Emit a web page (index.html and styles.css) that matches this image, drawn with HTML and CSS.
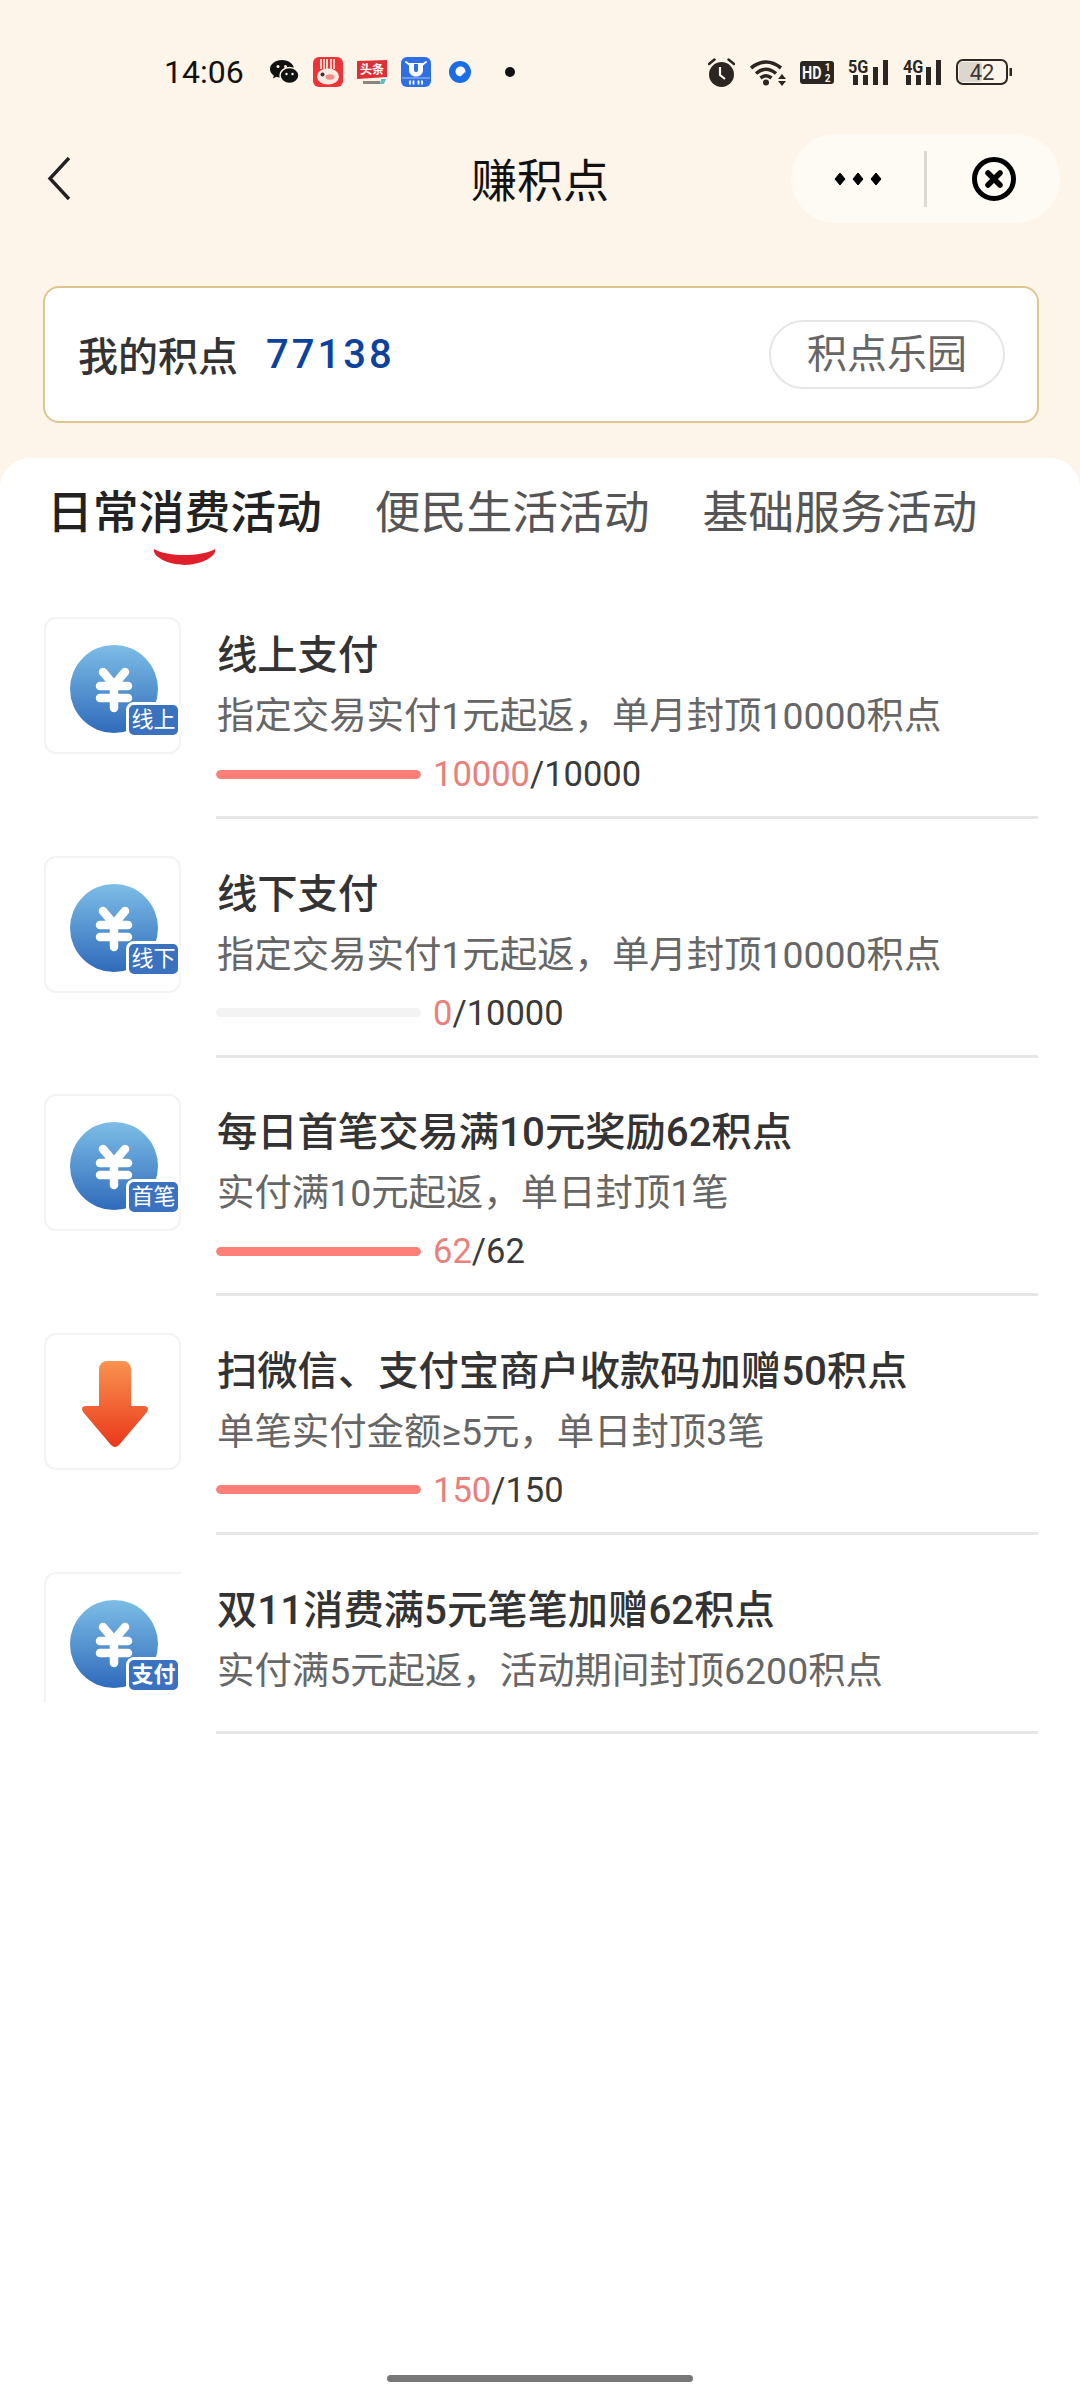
FILE: index.html
```html
<!DOCTYPE html>
<html>
<head>
    <meta charset="utf-8">
    <title>赚积点</title>
    <link rel="stylesheet" href="styles.css">
</head>
<body>
    <svg class="svg-defs" width="0" height="0">
        <defs>
            <linearGradient id="coin-fill" x1="0" y1="0" x2="0" y2="1">
                <stop offset="0" stop-color="#7dbde6"/>
                <stop offset="1" stop-color="#2f6bbb"/>
            </linearGradient>
            <linearGradient id="arrow-fill" x1="0" y1="0" x2="0" y2="1">
                <stop offset="0" stop-color="#f99350"/>
                <stop offset="1" stop-color="#e9381a"/>
            </linearGradient>
            <symbol id="coin" viewBox="0 0 133 133">
                <circle cx="68" cy="70" r="44" fill="url(#coin-fill)"/>
                <path d="M57 53 68 66 79 53M68 66V89M54 67H82M54 79H82" fill="none" stroke="#fff" stroke-width="8.5" stroke-linecap="round" stroke-linejoin="round"/>
            </symbol>
        </defs>
    </svg>

    <div class="page">
        <div class="statusbar">
            <div class="status-left">
                <span class="clock">14:06</span>
                <!-- wechat -->
                <svg class="ic-wechat" width="29" height="24" viewBox="0 0 29 24">
                    <path d="M12 0C5.400 0 0 4 0 9c0 2.700 1.500 5 3.800 6.600L3 18.500l3.400-1.700c1.700.6 3.600.9 5.600.9 6.600 0 12-4 12-8.700S18.600 0 12 0z" fill="#111"/>
                    <ellipse cx="19.500" cy="15.500" rx="9.500" ry="8" fill="#111" stroke="#fef5ea" stroke-width="1.500"/>
                    <circle cx="8" cy="6.500" r="1.500" fill="#fef5ea"/>
                    <circle cx="15.500" cy="6.500" r="1.500" fill="#fef5ea"/>
                    <circle cx="16.500" cy="14" r="1.200" fill="#fef5ea"/>
                    <circle cx="22.500" cy="14" r="1.200" fill="#fef5ea"/>
                </svg>
                <!-- red shopping app -->
                <svg width="30" height="30" viewBox="0 0 30 30">
                    <rect width="30" height="30" rx="6" fill="#ee3338"/>
                    <path d="M8 2v10M11 2v10M14 2v10M18 2v10M21 2v10" stroke="#fbe3d6" stroke-width="1.800"/>
                    <ellipse cx="15" cy="19.500" rx="11" ry="8" fill="#fbe9e3"/>
                    <ellipse cx="17" cy="20" rx="4.500" ry="2.800" fill="#f08d88"/>
                    <circle cx="9.500" cy="17.500" r="2" fill="#333"/>
                </svg>
                <!-- toutiao -->
                <svg width="30" height="25" viewBox="0 0 30 25">
                    <path d="M0 1 30 0V17L0 19z" fill="#dd2f35"/>
                    <text class="ic-text" x="15" y="14" font-size="12" font-weight="700" fill="#fff" text-anchor="middle">头条</text>
                    <rect x="6" y="21" width="17" height="3" fill="#8c8480"/>
                    <path d="M24 19h5l-2 5h-4z" fill="#59c2b8"/>
                </svg>
                <!-- blue app -->
                <svg width="30" height="30" viewBox="0 0 30 30">
                    <rect width="30" height="30" rx="6" fill="#2f6fe4"/>
                    <path d="M5 5 9 8M25 5 21 8" stroke="#fff" stroke-width="2" stroke-linecap="round"/>
                    <path d="M8 6h14v7c0 4-3 6.500-7 6.500S8 17 8 13z" fill="#fff"/>
                    <path d="M13 7h4v6c0 1.500-1 2-2 2s-2-.5-2-2z" fill="#2f6fe4"/>
                    <path d="M1 21H29" stroke="#a9c6f5" stroke-width="1"/>
                    <path d="M9 23.500v4M12.500 23.500v4M17.500 23.500v4M21 23.500v4" stroke="#fff" stroke-width="1.800"/>
                </svg>
                <!-- round blue app -->
                <svg class="ic-round" width="22" height="22" viewBox="0 0 22 22">
                    <circle cx="11" cy="11" r="11" fill="#1b6de6"/>
                    <circle cx="11.500" cy="10.500" r="5" fill="#fff"/>
                    <path d="M11 16 16 11 17 16z" fill="#1b6de6"/>
                </svg>
                <span class="status-dot"></span>
            </div>
            <div class="status-right">
                <svg width="27" height="29" viewBox="0 0 27 29">
                    <circle cx="13.500" cy="16.500" r="12.500" fill="#2b2622"/>
                    <path d="M12 9v8l5 4" fill="none" stroke="#fef5ea" stroke-width="2.200"/>
                    <path d="M1 6 6.500 1.500M26 6 20.500 1.500" stroke="#2b2622" stroke-width="2.500" stroke-linecap="round"/>
                </svg>
                <svg width="37" height="27" viewBox="0 0 37 27">
                    <path d="M2 9Q17-3 32 9M7 14.500Q17 6 27 14.500M11.500 19Q17 14.500 22.500 19" fill="none" stroke="#2b2622" stroke-width="3.600"/>
                    <circle cx="17" cy="23.500" r="3" fill="#2b2622"/>
                    <path d="M29 20 33 15 37 20zM29 22H37L33 27z" fill="#2b2622"/>
                </svg>
                <svg width="34" height="23" viewBox="0 0 34 23">
                    <rect width="34" height="23" rx="3" fill="#2b2622"/>
                    <text class="ic-text" transform="translate(2 18) scale(.8 1)" font-size="18" font-weight="700" fill="#fef5ea">HD</text>
                    <text class="ic-text" x="27.500" y="10" font-size="10" font-weight="700" fill="#fef5ea" text-anchor="middle">1</text>
                    <text class="ic-text" x="27.500" y="21" font-size="10" font-weight="700" fill="#fef5ea" text-anchor="middle">2</text>
                </svg>
                <svg width="41" height="27" viewBox="0 0 41 27">
                    <text class="ic-text" transform="translate(0 14) scale(.85 1)" font-size="19" font-weight="700" fill="#2b2622">5G</text>
                    <path d="M5 16h5v10H5zM15 16h5v10h-5zM25 8h5v18h-5zM35 1h5v25h-5z" fill="#2b2622"/>
                </svg>
                <svg width="39" height="27" viewBox="0 0 39 27">
                    <text class="ic-text" transform="translate(0 14) scale(.85 1)" font-size="19" font-weight="700" fill="#2b2622">4G</text>
                    <path d="M3 16h5v10H3zM13 16h5v10h-5zM23 8h5v18h-5zM33 1h5v25h-5z" fill="#2b2622"/>
                </svg>
                <svg width="56" height="26" viewBox="0 0 56 26">
                    <rect x="3" y="3" width="23" height="20" rx="3" fill="#dbd6ce"/>
                    <rect x="1" y="1" width="50" height="24" rx="6" fill="none" stroke="#2b2622" stroke-width="2"/>
                    <rect x="53.500" y="9" width="2.500" height="8" fill="#2b2622"/>
                    <text class="ic-text" x="26" y="21" font-size="22" fill="#3a3532" text-anchor="middle">42</text>
                </svg>
            </div>
        </div>

        <div class="nav">
            <svg class="nav-back" width="24" height="45" viewBox="0 0 24 45">
                <path d="M22 2 3 22.500 22 43" fill="none" stroke="#222" stroke-width="3.400"/>
            </svg>
            <div class="nav-title">赚积点</div>
            <div class="capsule">
                <div class="capsule-btn">
                    <svg width="48" height="14" viewBox="0 0 48 14">
                        <path d="M6 1l5 6-5 6-5-6zM24 1l5 6-5 6-5-6zM42 1l5 6-5 6-5-6z" fill="#000" stroke="#000" stroke-width="1" stroke-linejoin="round"/>
                    </svg>
                </div>
                <div class="capsule-line"></div>
                <div class="capsule-btn">
                    <svg width="44" height="44" viewBox="0 0 44 44">
                        <circle cx="22" cy="22" r="19.500" fill="none" stroke="#000" stroke-width="5"/>
                        <path d="M16 16 28 28M28 16 16 28" stroke="#000" stroke-width="5.500" stroke-linecap="round"/>
                    </svg>
                </div>
            </div>
        </div>

        <div class="points-card">
            <span class="points-label">我的积点</span>
            <span class="points-value">77138</span>
            <span class="points-btn">积点乐园</span>
        </div>

        <div class="sheet">
            <div class="tabs">
                <div class="tab active">
                    日常消费活动
                    <svg class="tab-mark" width="63" height="17" viewBox="0 0 63 17">
                        <path d="M1 1C15 9 48 9 62 1 64 10 45 17 31.500 17 18 17-1 10 1 1z" fill="#e01f2c"/>
                    </svg>
                </div>
                <div class="tab">便民生活活动</div>
                <div class="tab">基础服务活动</div>
            </div>

            <div class="list">
                <div class="row">
                    <div class="icon-box">
                        <svg class="icon-svg" viewBox="0 0 133 133"><use href="#coin"/></svg>
                        <span class="badge">线上</span>
                    </div>
                    <div class="row-body">
                        <div class="row-title">线上支付</div>
                        <div class="row-desc">指定交易实付1元起返，单月封顶10000积点</div>
                        <div class="progress">
                            <div class="bar"><div class="bar-fill" style="width: 100%"></div></div>
                            <span class="count"><em>10000</em>/10000</span>
                        </div>
                    </div>
                </div>

                <div class="row">
                    <div class="icon-box">
                        <svg class="icon-svg" viewBox="0 0 133 133"><use href="#coin"/></svg>
                        <span class="badge">线下</span>
                    </div>
                    <div class="row-body">
                        <div class="row-title">线下支付</div>
                        <div class="row-desc">指定交易实付1元起返，单月封顶10000积点</div>
                        <div class="progress">
                            <div class="bar"><div class="bar-fill" style="width: 0%"></div></div>
                            <span class="count"><em>0</em>/10000</span>
                        </div>
                    </div>
                </div>

                <div class="row">
                    <div class="icon-box">
                        <svg class="icon-svg" viewBox="0 0 133 133"><use href="#coin"/></svg>
                        <span class="badge">首笔</span>
                    </div>
                    <div class="row-body">
                        <div class="row-title">每日首笔交易满10元奖励62积点</div>
                        <div class="row-desc">实付满10元起返，单日封顶1笔</div>
                        <div class="progress">
                            <div class="bar"><div class="bar-fill" style="width: 100%"></div></div>
                            <span class="count"><em>62</em>/62</span>
                        </div>
                    </div>
                </div>

                <div class="row">
                    <div class="icon-box">
                        <svg class="icon-svg" viewBox="0 0 133 133">
                            <path d="M61 26h16a8 8 0 0 1 8 8V71h13q6 0 3 6L73 110q-4 4-8 0L37 77q-3-6 3-6H53V34a8 8 0 0 1 8-8z" fill="url(#arrow-fill)"/>
                        </svg>
                    </div>
                    <div class="row-body">
                        <div class="row-title">扫微信、支付宝商户收款码加赠50积点</div>
                        <div class="row-desc">单笔实付金额≥5元，单日封顶3笔</div>
                        <div class="progress">
                            <div class="bar"><div class="bar-fill" style="width: 100%"></div></div>
                            <span class="count"><em>150</em>/150</span>
                        </div>
                    </div>
                </div>

                <div class="row">
                    <div class="icon-box cut">
                        <svg class="icon-svg" viewBox="0 0 133 133"><use href="#coin"/></svg>
                        <span class="badge strong">支付</span>
                    </div>
                    <div class="row-body">
                        <div class="row-title">双11消费满5元笔笔加赠62积点</div>
                        <div class="row-desc">实付满5元起返，活动期间封顶6200积点</div>
                    </div>
                </div>
            </div>

            <div class="home-bar"></div>
        </div>
    </div>
</body>
</html>
```

FILE: styles.css
```css
* { box-sizing: border-box; }
body { margin: 0; background: #fef5ea; font-family: Roboto, "Noto Sans CJK SC", sans-serif; color: #333; }
.svg-defs { position: absolute; }
.ic-text { font-family: Roboto, "Noto Sans CJK SC", sans-serif; }
.page { min-height: 2400px; display: flex; flex-direction: column; }

/* status bar */
.statusbar { display: flex; justify-content: space-between; align-items: center; height: 48px; margin-top: 48px; padding: 0 68px 0 164px; }
.status-left { display: flex; align-items: center; gap: 14px; }
.status-right { display: flex; align-items: center; gap: 14px; }
.clock { font-size: 32px; color: #111; width: 92px; }
.ic-round { margin-left: 4px; }
.status-dot { width: 10px; height: 10px; border-radius: 50%; background: #111; margin-left: 20px; }

/* nav */
.nav { display: grid; grid-template-columns: 269px 1fr 269px; align-items: center; height: 89px; margin-top: 38px; padding: 0 20px; }
.nav-title { font-size: 46px; color: #111; line-height: 83px; padding-top: 6px; text-align: center; }
.nav-back { justify-self: start; margin-left: 27px; }
.capsule { justify-self: end; display: flex; align-items: center; width: 269px; height: 89px; border-radius: 45px; background: #fefaf4; }
.capsule-btn { flex: 1; display: flex; align-items: center; justify-content: center; }
.capsule-line { width: 3px; height: 56px; background: #ddd9d3; }

/* points card */
.points-card { display: flex; align-items: center; height: 137px; margin: 63px 41px 0 43px; padding: 0 32px 0 33px; background: #fff; border: 2px solid #e0c48f; border-radius: 16px; }
.points-label { font-size: 40px; font-weight: 500; color: #333; padding-bottom: 2px; }
.points-value { font-size: 40px; font-weight: 500; color: #0c429e; letter-spacing: 3px; margin-left: 28px; }
.points-btn { margin-left: auto; width: 236px; height: 69px; line-height: 65px; text-align: center; font-size: 40px; color: #666; border: 2px solid #e6e6e6; border-radius: 35px; }

/* sheet and tabs */
.sheet { flex: 1; display: flex; flex-direction: column; margin-top: 35px; background: #fff; border-radius: 30px 30px 0 0; }
.tabs { display: flex; align-items: flex-start; gap: 53px; height: 107px; padding: 26px 0 0 47px; }
.tab { font-size: 45.8px; line-height: 60px; color: #555; }
.tab.active { font-weight: 500; color: #222; }
.tab-mark { display: block; margin: 4px 0 0 106px; }

/* list */
.list { padding: 52px 42px 0 44px; }
.row { display: flex; gap: 35px; margin-bottom: 36.67px; }
.icon-box { position: relative; flex: none; width: 137px; height: 137px; border: 2px solid #f3f3f3; border-radius: 12px; }
.icon-box.cut { height: 131px; border-right: 0; border-bottom: 0; border-radius: 12px 0 0 0; }
.icon-svg { display: block; width: 133px; height: 133px; }
.badge { position: absolute; left: 80px; top: 83px; width: 55px; height: 36px; line-height: 30px; text-align: center; font-size: 22px; color: #fff; background: #3a72bf; border: 3px solid #fff; border-radius: 8px; }
.badge.strong { font-weight: 700; }
.row-body { flex: 1; padding: 9px 0 30px; border-bottom: 3px solid #e6e6e6; height: fit-content; }
.row-title { font-size: 40.3px; font-weight: 500; line-height: 60px; color: #333; padding-left: 1px; }
.row-desc { font-size: 37.4px; line-height: 60px; color: #666; padding-left: 1px; }
.progress { display: flex; align-items: center; height: 24px; margin-top: 16px; }
.bar { width: 205px; height: 9px; border-radius: 5px; background: #f3f3f3; overflow: hidden; }
.bar-fill { height: 100%; border-radius: 5px; background: #fd7f78; }
.count { margin-left: 12px; font-size: 34.5px; line-height: 24px; color: #3a3a3a; }
.count em { font-style: normal; color: #e9807b; }

.home-bar { width: 306px; height: 7px; margin: auto auto 18px; border-radius: 4px; background: #777; }
```
